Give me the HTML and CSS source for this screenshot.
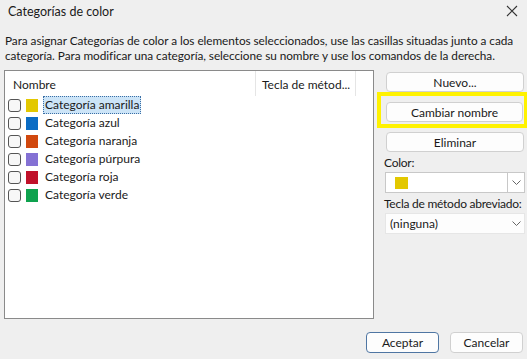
FILE: index.html
```html
<!DOCTYPE html>
<html>
<head>
    <meta charset="UTF-8">
    <title>Categorías de color</title>
    <link rel="stylesheet" href="styles.css">
</head>
<body>
    <div class="dialog">
        <div class="titlebar">
            <span class="title">Categorías de color</span>
            <svg class="close" width="12" height="12" viewBox="0 0 12 12">
                <path d="M1 1 L11 11 M11 1 L1 11" stroke="#333" stroke-width="1.1" fill="none"/>
            </svg>
        </div>

        <p class="intro">Para asignar Categorías de color a los elementos seleccionados, use las casillas situadas junto a cada<br>categoría. Para modificar una categoría, seleccione su nombre y use los comandos de la derecha.</p>

        <div class="main">
            <!-- lista de categorias -->
            <div class="list">
                <div class="list-head">
                    <span class="col-name">Nombre</span>
                    <span class="col-key">Tecla de métod...</span>
                </div>
                <div class="row">
                    <span class="check"></span>
                    <span class="swatch" style="background:#e3c800"></span>
                    <span class="label selected">Categoría amarilla</span>
                </div>
                <div class="row">
                    <span class="check"></span>
                    <span class="swatch" style="background:#0b6cc4"></span>
                    <span class="label">Categoría azul</span>
                </div>
                <div class="row">
                    <span class="check"></span>
                    <span class="swatch" style="background:#d1480e"></span>
                    <span class="label">Categoría naranja</span>
                </div>
                <div class="row">
                    <span class="check"></span>
                    <span class="swatch" style="background:#8471d4"></span>
                    <span class="label">Categoría púrpura</span>
                </div>
                <div class="row">
                    <span class="check"></span>
                    <span class="swatch" style="background:#c0112a"></span>
                    <span class="label">Categoría roja</span>
                </div>
                <div class="row">
                    <span class="check"></span>
                    <span class="swatch" style="background:#0ea24e"></span>
                    <span class="label">Categoría verde</span>
                </div>
            </div>

            <!-- comandos -->
            <div class="side">
                <button class="btn first">Nuevo...</button>
                <div class="marker">
                    <button class="btn">Cambiar nombre</button>
                </div>
                <button class="btn after">Eliminar</button>

                <label class="field-label">Color:</label>
                <div class="combo">
                    <span class="combo-value"><span class="combo-swatch"></span></span>
                    <span class="combo-arrow">
                        <svg width="9" height="5" viewBox="0 0 9 5"><path d="M0.5 0.5 L4.5 4.5 L8.5 0.5" stroke="#666" fill="none"/></svg>
                    </span>
                </div>

                <label class="field-label">Tecla de método abreviado:</label>
                <div class="combo flat">
                    <span class="combo-value">(ninguna)</span>
                    <span class="combo-arrow">
                        <svg width="9" height="5" viewBox="0 0 9 5"><path d="M0.5 0.5 L4.5 4.5 L8.5 0.5" stroke="#666" fill="none"/></svg>
                    </span>
                </div>
            </div>
        </div>

        <div class="footer">
            <button class="btn default">Aceptar</button>
            <button class="btn">Cancelar</button>
        </div>
    </div>
</body>
</html>
```

FILE: styles.css
```css
body {
    margin: 0;
    font-family: Lato, "Noto Sans", Arial, sans-serif;
    font-size: 12px;
    color: #1a1a1a;
    background-color: #efefef;
}

.dialog {
    width: 527px;
    height: 359px;
    overflow: hidden;
    background-color: #efefef;
}

.titlebar {
    height: 22px;
    display: flex;
    align-items: center;
    justify-content: space-between;
    padding: 0 9px 0 8px;
}

.title {
    font-size: 12.5px;
}

.intro {
    margin: 11px 0 0 5px;
    line-height: 15px;
    font-size: 11.8px;
    letter-spacing: -0.05px;
    white-space: nowrap;
}

.main {
    display: flex;
    margin-top: 7px;
    height: 249px;
}

/* lista */
.list {
    margin-left: 4px;
    width: 368px;
    height: 247px;
    background-color: #fff;
    border: 1px solid #8a8a8a;
}

.list-head {
    display: flex;
    height: 25px;
    white-space: nowrap;
}

.col-name {
    width: 242px;
    padding-left: 8px;
    line-height: 27px;
    border-right: 1px solid #e5e5e5;
}

.col-key {
    width: 93px;
    padding-left: 6px;
    line-height: 27px;
    border-right: 1px solid #e5e5e5;
}

.row {
    display: flex;
    align-items: center;
    height: 18px;
    padding-left: 3px;
}

.check {
    width: 11px;
    height: 11px;
    border: 1px solid #555;
    border-radius: 3px;
    background-color: #f7f7f7;
}

.swatch {
    width: 12px;
    height: 13px;
    margin-left: 5px;
}

.label {
    margin-left: 5px;
    padding: 0 1px;
    height: 16px;
    line-height: 16px;
    border: 1px solid transparent;
}

.label.selected {
    background-color: #cce4f7;
    border: 1px dotted #3a6ea5;
}

/* panel derecho */
.side {
    display: flex;
    flex-direction: column;
    margin-left: 3px;
    width: 150px;
    white-space: nowrap;
}

.btn {
    font-family: inherit;
    font-size: 12px;
    color: #1a1a1a;
    height: 20px;
    padding: 0;
    background-color: #fdfdfd;
    border: 1px solid #d0d0d0;
    border-radius: 4px;
}

.side > .btn {
    margin-left: 9px;
    width: 138px;
}

.side > .btn.first {
    margin-top: 2px;
}

.side > .btn.after {
    margin-top: 4px;
}

.marker {
    display: flex;
    padding: 6px 1px 2px 5px;
    border: 4px solid #fff200;
    border-right-width: 3px;
}

.marker .btn {
    width: 138px;
}

.field-label {
    margin: 3px 0 0 7px;
    line-height: 16px;
    letter-spacing: -0.25px;
}

.combo {
    display: flex;
    margin: 1px 0 0 8px;
    width: 138px;
    height: 19px;
    background-color: #fff;
    border: 1px solid #c8c8c8;
}

.combo-value {
    flex: 1;
    display: flex;
    align-items: center;
    padding-left: 9px;
}

.combo-swatch {
    width: 13px;
    height: 12px;
    background-color: #e3c800;
}

.combo-arrow {
    width: 16px;
    display: flex;
    align-items: center;
    justify-content: center;
    border-left: 1px solid #c8c8c8;
}

.combo.flat {
    background-color: #fdfdfd;
    border-color: #e6e6e6;
}

.combo.flat .combo-value {
    padding-left: 4px;
}

.combo.flat .combo-arrow {
    border-left: none;
}

.footer {
    display: flex;
    justify-content: flex-end;
    gap: 11px;
    padding: 13px 4px 0 0;
}

.footer .btn {
    width: 73px;
    height: 21px;
}

.footer .btn.default {
    border: 1px solid #4f76a3;
}
```
